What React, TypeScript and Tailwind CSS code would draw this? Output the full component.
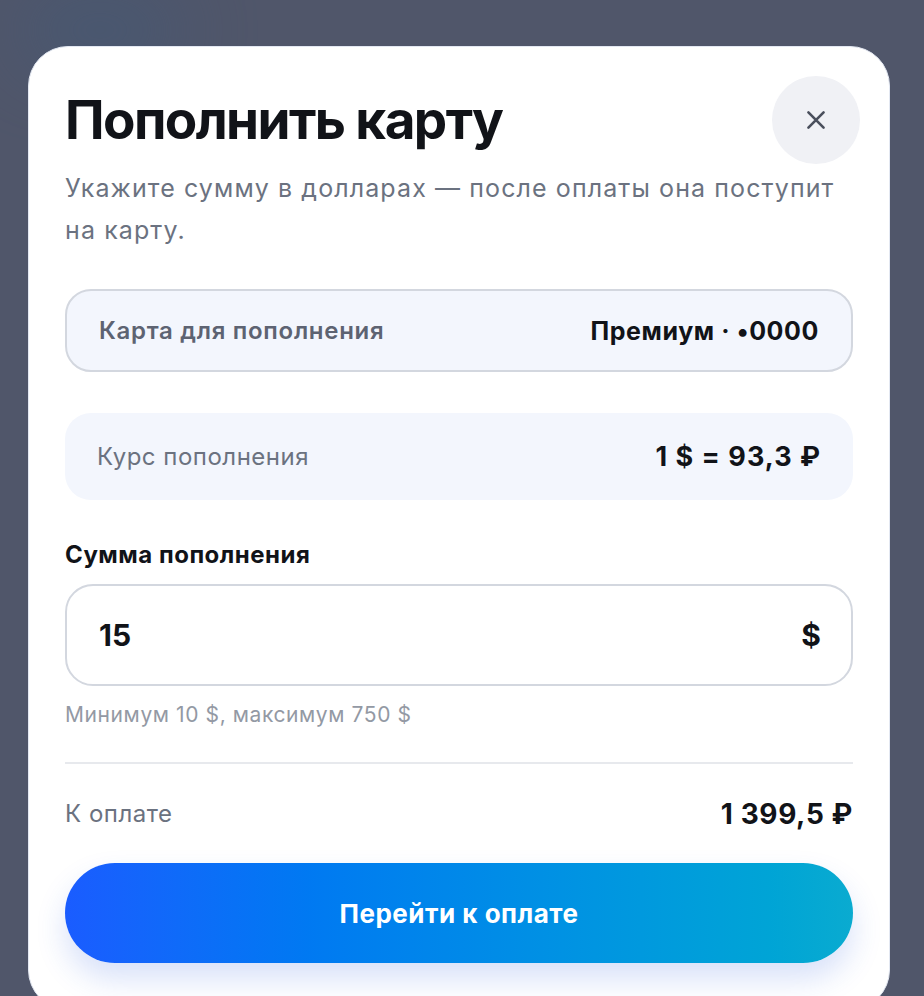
import React from "react";

export default function App() {
  return (
    <div
      className="relative w-[924px] h-[996px] overflow-hidden bg-[#50566a]"
      style={{ fontFamily: "Inter, 'Noto Sans', sans-serif" }}
    >
      <div className="absolute left-[20px] top-0 w-[160px] h-[60px] rounded-full bg-[#3f5a7a] opacity-60 blur-2xl" />
      <div className="absolute left-[28px] top-[46px] w-[862px] h-[964px] rounded-[40px] bg-white border border-[#e3e8f2] px-[36px] pt-[29px]">
        <div className="flex items-start justify-between h-[88px]">
          <h1 className="mt-[14px] text-[53px] leading-[60px] font-bold tracking-[-1.6px] text-[#111318]">
            Пополнить карту
          </h1>
          <button className="w-[88px] h-[88px] rounded-full bg-[#f0f1f5] flex items-center justify-center -mr-[7px]">
            <svg width="26" height="26" viewBox="0 0 24 24" fill="none" stroke="#4a4f5c" strokeWidth="2.4" strokeLinecap="round">
              <path d="M5 5L19 19M19 5L5 19" />
            </svg>
          </button>
        </div>
        <p className="mt-[3px] text-[25px] leading-[42px] text-[#6b7280] tracking-[1.1px]">
          Укажите сумму в долларах — после оплаты она поступит на карту.
        </p>
        <div className="mt-[38px] h-[83px] rounded-[26px] bg-[#f3f6fd] border-2 border-[#d3d7df] flex items-center justify-between px-[32px]">
          <span className="text-[24px] leading-[32px] font-semibold text-[#5d6372] tracking-[0.7px]">Карта для пополнения</span>
          <span className="text-[25px] leading-[32px] font-bold text-[#111318] tracking-[0.6px]">Премиум · •0000</span>
        </div>
        <div className="mt-[41px] h-[87px] rounded-[26px] bg-[#f3f6fd] flex items-center justify-between px-[32px]">
          <span className="text-[24px] leading-[32px] text-[#6b7280] tracking-[0.5px]">Курс пополнения</span>
          <span className="text-[27px] leading-[32px] font-bold text-[#111318] tracking-[1px]">1 $ = 93,3 ₽</span>
        </div>
        <div className="mt-[39px] text-[24px] leading-[32px] font-bold text-[#111318] tracking-[0.5px]">Сумма пополнения</div>
        <div className="mt-[13px] h-[102px] rounded-[28px] border-2 border-[#d3d7df] bg-white flex items-center justify-between pl-[32px] pr-[30px]">
          <span className="text-[30px] leading-[36px] font-bold text-[#111318]">15</span>
          <span className="text-[30px] leading-[36px] font-bold text-[#111318]">$</span>
        </div>
        <div className="mt-[15px] text-[21px] leading-[28px] text-[#9399a4] tracking-[0.6px]">Минимум 10 $, максимум 750 $</div>
        <div className="mt-[33px] h-[2px] bg-[#e7e9ed]" />
        <div className="mt-[32px] h-[36px] flex items-center justify-between">
          <span className="text-[24px] leading-[36px] text-[#6b7280] tracking-[0.5px]">К оплате</span>
          <span className="text-[28px] leading-[36px] font-bold text-[#111318] tracking-[0.6px]">1 399,5 ₽</span>
        </div>
        <button
          className="mt-[31px] w-full h-[100px] rounded-full bg-gradient-to-r from-[#1a5cff] to-[#0aabd0] text-white text-[26px] font-bold tracking-[0.5px] shadow-[0_16px_30px_rgba(40,90,220,0.18)]"
        >
          Перейти к оплате
        </button>
      </div>
    </div>
  );
}
